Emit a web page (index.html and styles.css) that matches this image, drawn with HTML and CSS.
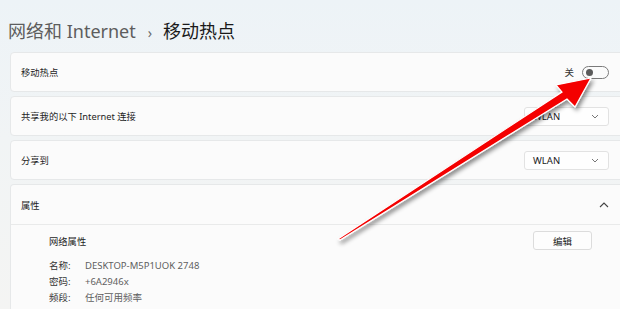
FILE: index.html
```html
<!DOCTYPE html>
<html lang="zh-CN">
<head>
<meta charset="utf-8">
<link rel="stylesheet" href="styles.css">
</head>
<body>
<div class="page">
  <header class="crumb">
    <span class="crumb-parent">网络和 Internet</span>
    <span class="crumb-sep">›</span>
    <span class="crumb-current">移动热点</span>
  </header>
  <div class="cards">
    <div class="card row">
      <span class="label">移动热点</span>
      <div class="toggle-wrap">
        <span class="toggle-text">关</span>
        <span class="toggle"><span class="knob"></span></span>
      </div>
    </div>
    <div class="card row">
      <span class="label">共享我的以下 Internet 连接</span>
      <div class="select"><span>WLAN</span>
        <svg class="chev" width="8" height="5" viewBox="0 0 8 5"><path d="M1 1 L4 4 L7 1" fill="none" stroke="#777" stroke-width="1"/></svg>
      </div>
    </div>
    <div class="card row">
      <span class="label">分享到</span>
      <div class="select"><span>WLAN</span>
        <svg class="chev" width="8" height="5" viewBox="0 0 8 5"><path d="M1 1 L4 4 L7 1" fill="none" stroke="#777" stroke-width="1"/></svg>
      </div>
    </div>
    <div class="card expander">
      <div class="row head">
        <span class="label">属性</span>
        <svg class="chev-up" width="10" height="6" viewBox="0 0 10 6"><path d="M1 5 L5 1 L9 5" fill="none" stroke="#444" stroke-width="1.1"/></svg>
      </div>
      <div class="body">
        <div class="body-top">
          <span class="label">网络属性</span>
          <button class="btn">编辑</button>
        </div>
        <dl class="props">
          <dt>名称:</dt><dd>DESKTOP-M5P1UOK 2748</dd>
          <dt>密码:</dt><dd>+6A2946x</dd>
          <dt>频段:</dt><dd>任何可用频率</dd>
        </dl>
      </div>
    </div>
  </div>
  <svg class="arrow" width="620" height="309" viewBox="0 0 620 309">
    <defs>
      <filter id="sh" x="-10%" y="-10%" width="130%" height="130%">
        <feDropShadow dx="2" dy="3" stdDeviation="2" flood-color="#000" flood-opacity="0.45"/>
      </filter>
    </defs>
    <polygon filter="url(#sh)" points="338,239 562,92 556,85 591,78 575,107 567,99 340,240" fill="#f40000" stroke="#ffffff" stroke-width="1.2" stroke-linejoin="miter"/>
  </svg>
</div>
</body>
</html>
```
FILE: styles.css
```css
* { box-sizing: border-box; }
html, body { margin: 0; padding: 0; }
body {
  width: 620px;
  height: 309px;
  overflow: hidden;
  font-family: "Segoe UI", "Noto Sans", "Noto Sans CJK SC", sans-serif;
  background: linear-gradient(180deg, #edf3f7 0%, #f1f4f5 45%, #f4f4f3 100%);
  color: #1b1b1b;
}
.page {
  position: relative;
  width: 620px;
  height: 309px;
}
.crumb {
  height: 52px;
  padding: 19px 0 0 8px;
  display: flex;
  align-items: baseline;
  font-size: 18px;
  line-height: 24px;
}
.crumb-parent { color: #5d5d5d; }
.crumb-sep { color: #6a6a6a; font-size: 14px; margin: 0 11px 0 12px; }
.crumb-current { color: #1a1a1a; }
.cards {
  display: flex;
  flex-direction: column;
  gap: 4px;
  padding-left: 10px;
  margin-right: -12px;
}
.card {
  background: #fbfbfb;
  border: 1px solid #e6e8e9;
  border-radius: 4px;
}
.row {
  height: 40px;
  display: flex;
  align-items: center;
  justify-content: space-between;
  padding: 0 22px 0 10px;
}
.label { font-size: 9.3px; color: #1e1e1e; }
.toggle-wrap { display: flex; align-items: center; gap: 8px; margin-right: 0; }
.toggle-text { font-size: 9.5px; color: #333; }
.toggle {
  width: 27px;
  height: 13px;
  border: 1px solid #7a7a7a;
  border-radius: 7px;
  display: flex;
  align-items: center;
  padding-left: 2.5px;
}
.knob { width: 7px; height: 7px; border-radius: 50%; background: #5a5a5a; }
.select {
  width: 85px;
  height: 19px;
  background: #fefefe;
  border: 1px solid #e2e2e2;
  border-radius: 3px;
  display: flex;
  align-items: center;
  justify-content: space-between;
  padding: 0 9px 0 8px;
  font-size: 9.5px;
  color: #222;
  margin-right: 0;
}
.chev-up { margin-right: 0; }
.expander { border-bottom: none; border-radius: 4px 4px 0 0; height: 140px; }
.head { border-bottom: 1px solid #e9eaea; height: 40px; }
.body { padding: 6px 22px 0 38px; }
.body-top {
  height: 19px;
  display: flex;
  align-items: center;
  justify-content: space-between;
}
.btn {
  width: 59px;
  height: 19px;
  border: 1px solid #dcdcdc;
  border-radius: 3px;
  background: #fdfdfd;
  font-family: inherit;
  font-size: 9.5px;
  color: #222;
  padding: 0;
  margin-right: 17px;
}
.props {
  margin: 9px 0 0 0;
  display: grid;
  grid-template-columns: 36px auto;
  row-gap: 3px;
  font-size: 9.5px;
  line-height: 13px;
}
.props dt { color: #333; }
.props dd { margin: 0; color: #5f5f5f; }
.arrow { position: absolute; left: 0; top: 0; pointer-events: none; }
```
